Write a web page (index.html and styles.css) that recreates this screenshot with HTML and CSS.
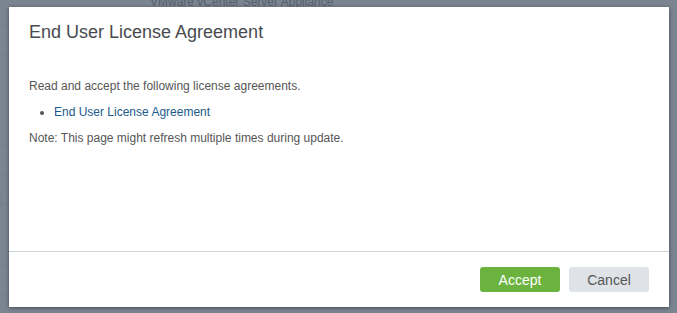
FILE: index.html
```html
<!DOCTYPE html>
<html lang="en">
    <head>
        <meta charset="UTF-8" />
        <title>End User License Agreement</title>
        <link rel="stylesheet" href="styles.css">
    </head>
    <body>
        <div class="backdrop-page">
            <div class="app-title">VMware vCenter Server Appliance</div>
            <div class="side-letter">t</div>
        </div>
        <div class="modal">
            <div class="modal-header">End User License Agreement</div>
            <div class="modal-body">
                <p>Read and accept the following license agreements.</p>
                <ul>
                    <li><a href="#">End User License Agreement</a></li>
                </ul>
                <p>Note: This page might refresh multiple times during update.</p>
            </div>
            <div class="modal-footer">
                <button class="btn btn-primary">Accept</button>
                <button class="btn btn-secondary">Cancel</button>
            </div>
        </div>
    </body>
</html>
```

FILE: styles.css
```css
* {
    box-sizing: border-box;
}
body {
    margin: 0;
    height: 100vh;
    overflow: hidden;
    background-color: #7a8591;
    font-family: "Liberation Sans", Arial, sans-serif;
    color: #565656;
}
.backdrop-page {
    height: 100%;
    background-image: repeating-linear-gradient(to bottom, transparent 0, transparent 29px, #77818d 29px, #77818d 30px);
}
.app-title {
    padding-left: 150px;
    margin-top: -5px;
    font-size: 12px;
    line-height: 14px;
    color: #58616d;
}
.side-letter {
    margin-top: 181px;
    margin-left: -4px;
    font-size: 16px;
    color: #535878;
}
.modal {
    position: absolute;
    left: 9px;
    top: 7px;
    width: 660px;
    height: 300px;
    display: flex;
    flex-direction: column;
    background-color: #ffffff;
    box-shadow: 0 1px 4px rgba(0, 0, 0, 0.45);
}
.modal-header {
    padding: 13px 20px 0;
    font-size: 18px;
    line-height: 24px;
    color: #474a4f;
}
.modal-body {
    flex: 1;
    padding: 0 20px;
    font-size: 12px;
    line-height: 16px;
}
.modal-body p {
    margin: 34px 0 0;
}
.modal-body ul {
    margin: 10px 0 0;
    padding-left: 25px;
}
.modal-body ul + p {
    margin-top: 10px;
}
.modal-body a {
    color: #1c5a8c;
    text-decoration: none;
}
.modal-footer {
    display: flex;
    justify-content: flex-end;
    gap: 9px;
    padding: 15px 20px 15px;
    border-top: 1px solid #ccd3d8;
}
.btn {
    width: 80px;
    height: 25px;
    border: none;
    border-radius: 3px;
    font-family: "Liberation Sans", Arial, sans-serif;
    font-size: 14px;
}
.btn-primary {
    background-color: #6bb33e;
    color: #ffffff;
}
.btn-secondary {
    background-color: #dfe3e7;
    color: #565656;
}
```
